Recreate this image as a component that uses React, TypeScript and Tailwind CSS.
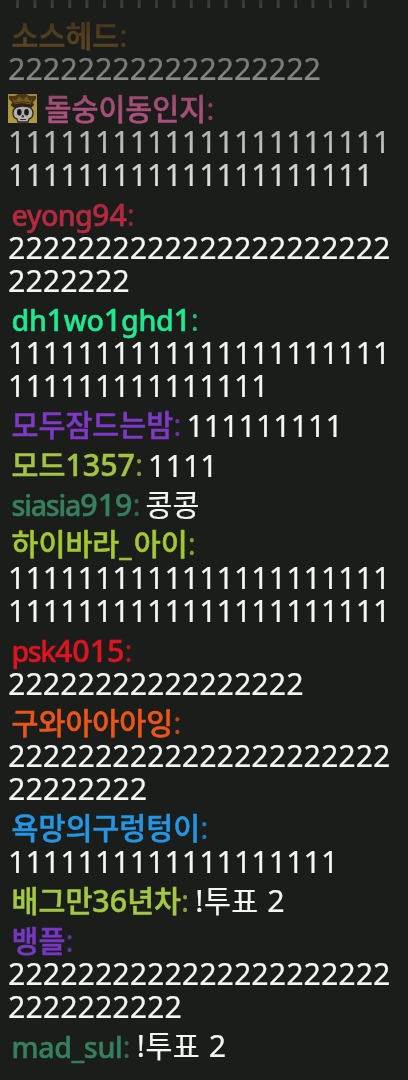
import type { ReactNode } from "react";

type Message = {
  name: string;
  color: string;
  tracking?: string;
  inline?: string;
  lines?: string[];
  badge?: boolean;
};

const messages: Message[] = [
  { name: "소스헤드", color: "text-[#c88428]", lines: ["222222222222222222"] },
  {
    name: "돌숭이동인지",
    color: "text-[#ee69a8]",
    badge: true,
    lines: ["1111111111111111111111", "111111111111111111111"],
  },
  {
    name: "eyong94",
    color: "text-[#b52a40]",
    tracking: "tracking-[-0.7px]",
    lines: ["2222222222222222222222", "2222222"],
  },
  {
    name: "dh1wo1ghd1",
    color: "text-[#20e990]",
    tracking: "tracking-[-0.35px]",
    lines: ["1111111111111111111111", "111111111111111"],
  },
  { name: "모두잠드는밤", color: "text-[#8038cb]", inline: "111111111" },
  { name: "모드1357", color: "text-[#a3c343]", inline: "1111" },
  { name: "siasia919", color: "text-[#37805f]", tracking: "tracking-[-1.2px]", inline: "콩콩" },
  {
    name: "하이바라_아이",
    color: "text-[#a3c735]",
    tracking: "tracking-[2px]",
    lines: ["1111111111111111111111", "1111111111111111111111"],
  },
  { name: "psk4015", color: "text-[#de1420]", tracking: "tracking-[-1.4px]", lines: ["22222222222222222"] },
  { name: "구와아아아잉", color: "text-[#ec5519]", lines: ["2222222222222222222222", "22222222"] },
  { name: "욕망의구렁텅이", color: "text-[#2397e5]", lines: ["1111111111111111111"] },
  { name: "배그만36년차", color: "text-[#a3c843]", inline: "!투표 2" },
  { name: "뱅플", color: "text-[#7838c4]", lines: ["2222222222222222222222", "2222222222"] },
  { name: "mad_sul", color: "text-[#37805f]", tracking: "tracking-[-0.3px]", inline: "!투표 2" },
];

function Line({ children }: { children: ReactNode }) {
  return <div className="flex h-[33px] items-center whitespace-pre">{children}</div>;
}

function Words({ text, tracking = "" }: { text: string; tracking?: string }) {
  const runs = text.match(/[가-힣]+|[a-z_]+|[^가-힣a-z_]+/g) ?? [];
  return runs.map((run, i) => {
    const style = /[가-힣]/.test(run)
      ? "text-[29.3px]"
      : /[a-z_]/.test(run)
        ? `text-[28.6px] ${tracking}`
        : "";
    return (
      <span key={i} className={style}>
        {run}
      </span>
    );
  });
}

function Badge() {
  return (
    <svg viewBox="0 0 29 29" className="mr-[4px] size-[29px] shrink-0">
      <rect width="29" height="29" fill="#f2d650" />
      <path d="M1 2h6l3-2h8l3 2h7v3l-3 3 1 4-4 1H7l-4-1 1-4-3-3z" fill="#6d4712" />
      <path d="M4 4l4 3 3-5 4 4 4-4 3 5 3-3-3 6H7z" fill="#b17c20" />
      <path d="M3 10q11-5 23 0l-3 4q-9-3-17 0z" fill="#3a260e" />
      <path d="M6 10q8-3 17 0" stroke="#a87a32" fill="none" />
      <path d="M5 19q0-7 10-7t10 7q0 5-4 6l-1 3H10l-1-3q-4-1-4-6z" fill="#fffaf7" stroke="#382b21" strokeWidth="1.3" />
      <ellipse cx="11.3" cy="18.3" rx="2.3" ry="3.2" fill="#17121b" />
      <ellipse cx="18.5" cy="18.3" rx="2.3" ry="3.2" fill="#17121b" />
      <path d="M14.8 21l-1 2h2zM12 25.5h6" stroke="#443b43" fill="none" />
    </svg>
  );
}

function ChatMessage({ name, color, tracking, inline, lines = [], badge }: Message) {
  return (
    <li>
      <Line>
        {badge && <Badge />}
        <span className={`pl-[3.5px] ${color}`}>
          <span className="font-medium [-webkit-text-stroke:0.5px_currentColor]">
            <Words text={name} tracking={tracking} />
          </span>
          <span className="opacity-80">:</span>
        </span>
        {inline && (
          <span className={inline.startsWith("!") ? "pl-[6px] tracking-[0.5px]" : "pl-[5px]"}>
            <Words text={inline} />
          </span>
        )}
      </Line>
      {lines.map((line, i) => (
        <Line key={i}>{line}</Line>
      ))}
    </li>
  );
}

export default function App() {
  return (
    <main className="h-[1080px] w-[408px] overflow-hidden bg-[#1b1d1b]">
      <ul className="flex h-full flex-col justify-end gap-[6.65px] mask-[linear-gradient(to_bottom,rgba(0,0,0,0.12)_0px,rgba(0,0,0,0.34)_38px,rgba(0,0,0,0.45)_69px,rgba(0,0,0,0.66)_108px,rgba(0,0,0,0.72)_141px,rgba(0,0,0,0.87)_175px,black_215px)] pb-[17.3px] pl-[8px] font-['Noto_Sans','Noto_Sans_CJK_KR',sans-serif] text-[30.4px] leading-[33px] text-[#f5f5f5] [-webkit-text-stroke:0.2px_currentColor]">
        <li>
          <Line>111111111111111111111</Line>
        </li>
        {messages.map((message) => (
          <ChatMessage key={message.name} {...message} />
        ))}
      </ul>
    </main>
  );
}
